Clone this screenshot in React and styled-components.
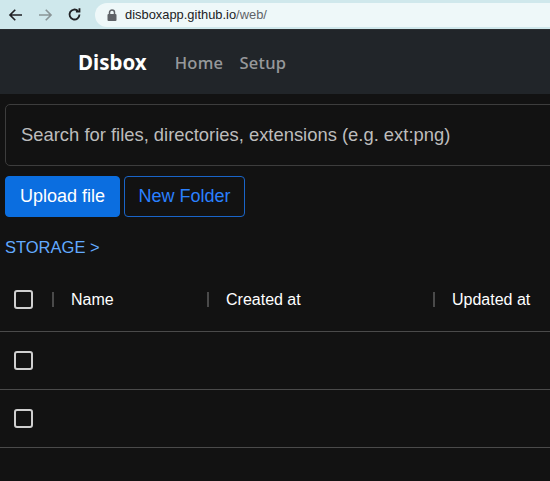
import styled, { createGlobalStyle } from "styled-components";

const Global = createGlobalStyle`
  html, body {
    margin: 0;
    background: #121212;
    overflow: hidden;
  }
`;

function Checkbox() {
  return <Box />;
}

function App() {
  return (
    <>
      <Global />
      <Page>
        <Chrome>
          <NavIcon>
            <svg width="18" height="18" viewBox="0 0 24 24" fill="none" stroke="#202124" strokeWidth="2.2">
              <path d="M20 12H5M11 5l-7 7 7 7" />
            </svg>
          </NavIcon>
          <NavIcon>
            <svg width="18" height="18" viewBox="0 0 24 24" fill="none" stroke="#8a9597" strokeWidth="2.2">
              <path d="M4 12h15M13 5l7 7-7 7" />
            </svg>
          </NavIcon>
          <NavIcon>
            <svg width="17" height="17" viewBox="0 0 24 24" fill="none" stroke="#202124" strokeWidth="2.6">
              <path d="M19 12a7 7 0 1 1-2.1-5" />
              <path d="M19 3v5h-5" fill="none" />
            </svg>
          </NavIcon>
          <Address>
            <svg width="10" height="12" viewBox="0 0 10 12">
              <rect x="0.5" y="5" width="9" height="7" rx="1" fill="#5f6368" />
              <path d="M2.5 5V3.5a2.5 2.5 0 0 1 5 0V5" stroke="#5f6368" strokeWidth="1.5" fill="none" />
            </svg>
            <Url>
              disboxapp.github.io<UrlPath>/web/</UrlPath>
            </Url>
          </Address>
        </Chrome>
        <NavBar>
          <Brand>Disbox</Brand>
          <NavLink>Home</NavLink>
          <NavLink>Setup</NavLink>
        </NavBar>
        <Content>
          <Search placeholder="Search for files, directories, extensions (e.g. ext:png)" />
          <Actions>
            <PrimaryButton>Upload file</PrimaryButton>
            <OutlineButton>New Folder</OutlineButton>
          </Actions>
          <Crumb>STORAGE &gt;</Crumb>
          <Table>
            <HeaderRow>
              <CheckCell>
                <Checkbox />
              </CheckCell>
              <Sep />
              <HeadCell $w={153}>Name</HeadCell>
              <Sep />
              <HeadCell $w={224}>Created at</HeadCell>
              <Sep />
              <HeadCell $w={115}>Updated at</HeadCell>
            </HeaderRow>
            <Row>
              <CheckCell>
                <Checkbox />
              </CheckCell>
            </Row>
            <Row>
              <CheckCell>
                <Checkbox />
              </CheckCell>
            </Row>
          </Table>
        </Content>
      </Page>
    </>
  );
}

const Page = styled.div`
  width: 550px;
  height: 481px;
  overflow: hidden;
  background: #121212;
`;

const Chrome = styled.div`
  height: 29px;
  background: #cfe8ec;
  border-bottom: 1px solid #2a2d30;
  display: flex;
  align-items: center;
  padding-left: 7px;
  gap: 11px;
`;

const NavIcon = styled.span`
  width: 18px;
  height: 18px;
  display: flex;
  align-items: center;
  justify-content: center;
`;

const Address = styled.div`
  margin-left: 1px;
  flex: 1;
  height: 24px;
  background: #eef8f9;
  border-radius: 12px 0 0 12px;
  display: flex;
  align-items: center;
  padding-left: 12px;
  gap: 8px;
`;

const Url = styled.span`
  font-family: "Liberation Sans", Arial, sans-serif;
  font-size: 12.9px;
  color: #202124;
`;

const UrlPath = styled.span`
  color: #5f6368;
`;

const NavBar = styled.div`
  height: 64px;
  background: #212529;
  display: flex;
  align-items: center;
  padding-left: 78px;
  font-family: "Noto Sans", "Open Sans", sans-serif;
`;

const Brand = styled.span`
  color: #fff;
  font-size: 20.5px;
  font-weight: 700;
  margin-right: 28px;
`;

const NavLink = styled.span`
  color: rgba(255, 255, 255, 0.55);
  font-size: 16.5px;
  font-weight: 500;
  letter-spacing: 0.3px;
  margin-right: 16px;
`;

const Content = styled.div`
  padding: 10px 0 0 5px;
  font-family: "Liberation Sans", Arial, sans-serif;
`;

const Search = styled.input`
  box-sizing: border-box;
  width: 560px;
  height: 62px;
  background: #121212;
  border: 1px solid #3d3d3d;
  border-radius: 5px;
  padding: 0 15px;
  font-family: "Liberation Sans", Arial, sans-serif;
  font-size: 18.4px;
  color: #ddd;
  outline: none;
  display: block;
  &::placeholder {
    color: #bdbdbd;
  }
`;

const Actions = styled.div`
  display: flex;
  gap: 4px;
  margin-top: 10px;
`;

const PrimaryButton = styled.button`
  height: 41px;
  width: 115px;
  background: #0b6ee0;
  border: 1px solid #0b6ee0;
  border-radius: 4px;
  color: #fff;
  font-family: "Liberation Sans", Arial, sans-serif;
  font-size: 18px;
  padding: 0;
`;

const OutlineButton = styled(PrimaryButton)`
  width: 121px;
  background: transparent;
  border-color: #1a65c8;
  color: #2a80ff;
`;

const Crumb = styled.div`
  margin-top: 21px;
  color: #62aaff;
  font-size: 16.5px;
  line-height: 18px;
`;

const Table = styled.div`
  margin-top: 12px;
  margin-left: -5px;
`;

const HeaderRow = styled.div`
  height: 63px;
  display: flex;
  align-items: center;
  border-bottom: 1px solid #4a4a4a;
  color: #fff;
  font-size: 16px;
`;

const Row = styled.div`
  height: 57px;
  display: flex;
  align-items: center;
  border-bottom: 1px solid #4a4a4a;
`;

const CheckCell = styled.div`
  width: 52px;
  flex-shrink: 0;
  padding-left: 14px;
  box-sizing: border-box;
  display: flex;
  align-items: center;
`;

const Box = styled.span`
  width: 15px;
  height: 15px;
  border: 2px solid #cfcfcf;
  border-radius: 3px;
  display: block;
`;

const Sep = styled.span`
  width: 2px;
  height: 15px;
  flex-shrink: 0;
  background: #4a4a4a;
`;

const HeadCell = styled.div`
  width: ${(p) => p.$w}px;
  padding-left: 17px;
  box-sizing: border-box;
  flex-shrink: 0;
  white-space: nowrap;
`;

export default App;
